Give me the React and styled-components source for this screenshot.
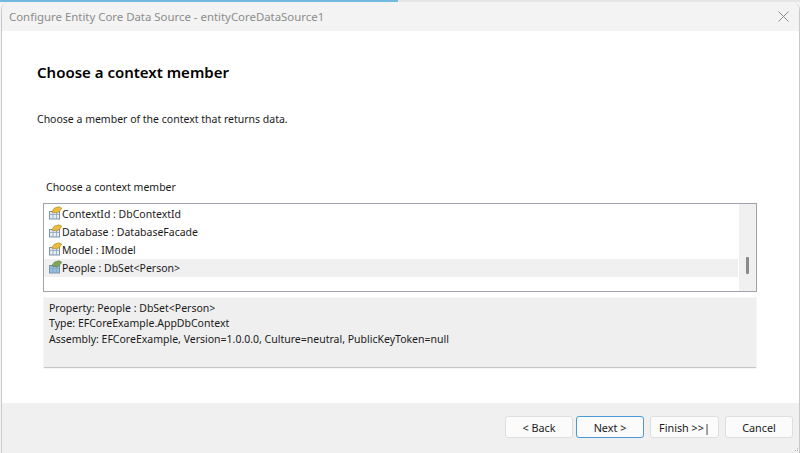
import React from 'react'
import styled, { createGlobalStyle } from 'styled-components'

const GlobalStyle = createGlobalStyle`
    html, body {
        margin: 0;
        padding: 0;
        background: #fff;
    }
    body {
        font-family: "Noto Sans", "Open Sans", sans-serif;
        color: #1a1a1a;
        overflow: hidden;
    }
`

const StyledPage = styled.div`
    width: 800px;
    height: 453px;
    display: flex;
    flex-direction: column;
    background: #f4f4f4;
    overflow: hidden;
`

const StyledProgress = styled.div`
    height: 2px;
    flex: none;
    background: linear-gradient(to right, #74b9e0 0, #74b9e0 398px, #e6e6e6 398px);
`

const StyledWindow = styled.div`
    flex: 1;
    display: flex;
    flex-direction: column;
    margin-left: 1px;
    border-left: 1px solid #c8c8c8;
    border-right: 1px solid #c8c8c8;
    border-top-left-radius: 8px;
    border-top-right-radius: 8px;
    overflow: hidden;
    background: #fff;
`

const StyledTitleBar = styled.div`
    height: 29px;
    flex: none;
    display: flex;
    align-items: center;
    justify-content: space-between;
    padding: 0 10px 0 7px;
    background: #f3f3f3;
`

const StyledTitle = styled.span`
    font-size: 11.4px;
    color: #8c8c8c;
`

const StyledClose = styled.svg`
    width: 11px;
    height: 11px;
    stroke: #8e8e8e;
    stroke-width: 1;
    fill: none;
`

const StyledBody = styled.div`
    flex: 1;
    display: flex;
    flex-direction: column;
    padding: 30px 42px 0 35px;
`

const StyledHeading = styled.h1`
    margin: 0;
    font-size: 15px;
    line-height: 22px;
    font-weight: 600;
    color: #000;
`

const StyledIntro = styled.p`
    margin: 28px 0 0;
    font-size: 10.5px;
    line-height: 16px;
`

const StyledGroup = styled.div`
    margin: 52px 0 0 6px;
    display: flex;
    flex-direction: column;
`

const StyledLabel = styled.label`
    padding-left: 3px;
    font-size: 10.5px;
    line-height: 16px;
`

const StyledList = styled.div`
    margin-top: 8px;
    height: 89px;
    box-sizing: border-box;
    border: 1px solid #a0a4aa;
    display: flex;
    background: #fff;
`

const StyledRows = styled.ul`
    flex: 1;
    margin: 0;
    padding: 1px 1px 0 0;
    list-style: none;
`

const StyledRow = styled.li`
    height: 18px;
    box-sizing: border-box;
    padding: 0 0 0 4px;
    display: flex;
    align-items: center;
    font-size: 10.5px;
    background: ${({ selected }) => (selected ? '#f0f0f0' : 'transparent')};
`

const StyledRowIcon = styled.svg`
    width: 14px;
    height: 14px;
    flex: none;
    margin-bottom: 2px;
`

const StyledScrollbar = styled.div`
    width: 17px;
    flex: none;
    display: flex;
    justify-content: center;
    padding-top: 53px;
    box-sizing: border-box;
    background: #f0f0f0;
`

const StyledThumb = styled.div`
    width: 3px;
    height: 17px;
    border-radius: 1px;
    background: #8a8a8a;
`

const StyledDetails = styled.div`
    margin: 6px 0 0 1px;
    width: 712px;
    height: 70px;
    box-sizing: border-box;
    padding: 3px 5px 0;
    background: #efefef;
    border-bottom: 1px solid #c4c4c4;
    box-shadow: 0 0 0 1px #f6f6f6;
    font-size: 10.5px;
    line-height: 15.4px;
`

const StyledFooter = styled.div`
    position: relative;
    height: 50px;
    flex: none;
    display: flex;
    align-items: center;
    justify-content: flex-end;
    gap: 3px;
    padding: 0 6px 2px 0;
    box-sizing: border-box;
    background: #f0f0f0;
`

const StyledGrip = styled.svg`
    position: absolute;
    right: 0;
    bottom: 0;
    width: 5px;
    height: 5px;
    fill: #b4b4b4;
`

const StyledButton = styled.button`
    width: ${({ wide }) => (wide ? '69px' : '68px')};
    height: 22px;
    margin-left: ${({ gapped }) => (gapped ? '3px' : '0')};
    padding: 0;
    box-sizing: border-box;
    border: 1px solid ${({ primary }) => (primary ? '#4a9ad8' : '#dedede')};
    border-radius: 3px;
    background: #fbfbfb;
    font-family: inherit;
    font-size: 10.8px;
    color: #1a1a1a;
`

const PropertyIcon = ({ selected }) => (
    <StyledRowIcon viewBox="0 0 14 14">
        <rect x="1.5" y="5.5" width="10" height="7.5" fill={selected ? '#8fc0e6' : '#e4ecf4'} stroke="#7d93a8" />
        <path d="M1.5 8.5h10M5 5.5v7.5M8.5 5.5v7.5" stroke="#8fa5ba" strokeWidth=".8" />
        <path d="M3.5 6 L6.5 2 L11 .8 L13.8 2.2 L12 4.5 L9.5 7 Z" fill={selected ? '#7da65a' : '#ecbd3c'} stroke={selected ? '#5a8040' : '#a67c1e'} strokeWidth=".6" />
    </StyledRowIcon>
)

const members = [
    { name: 'ContextId : DbContextId' },
    { name: 'Database : DatabaseFacade' },
    { name: 'Model : IModel' },
    { name: 'People : DbSet<Person>', selected: true }
]

export default function App() {
    return <StyledPage>
        <GlobalStyle />
        <StyledProgress />
        <StyledWindow>
            <StyledTitleBar>
                <StyledTitle>Configure Entity Core Data Source - entityCoreDataSource1</StyledTitle>
                <StyledClose viewBox="0 0 11 11">
                    <path d="M.5.5l10 10M10.5.5l-10 10" />
                </StyledClose>
            </StyledTitleBar>
            <StyledBody>
                <StyledHeading>Choose a context member</StyledHeading>
                <StyledIntro>Choose a member of the context that returns data.</StyledIntro>
                <StyledGroup>
                    <StyledLabel>Choose a context member</StyledLabel>
                    <StyledList>
                        <StyledRows>
                            {members.map(member => (
                                <StyledRow key={member.name} selected={member.selected}>
                                    <PropertyIcon selected={member.selected} />
                                    {member.name}
                                </StyledRow>
                            ))}
                        </StyledRows>
                        <StyledScrollbar>
                            <StyledThumb />
                        </StyledScrollbar>
                    </StyledList>
                    <StyledDetails>
                        Property: People : DbSet&lt;Person&gt;<br />
                        Type: EFCoreExample.AppDbContext<br />
                        Assembly: EFCoreExample, Version=1.0.0.0, Culture=neutral, PublicKeyToken=null
                    </StyledDetails>
                </StyledGroup>
            </StyledBody>
            <StyledFooter>
                <StyledButton>&lt; Back</StyledButton>
                <StyledButton primary>Next &gt;</StyledButton>
                <StyledButton wide gapped>Finish &gt;&gt;|</StyledButton>
                <StyledButton gapped>Cancel</StyledButton>
                <StyledGrip viewBox="0 0 5 5">
                    <rect x="3" y="0" width="1" height="1" />
                    <rect x="1" y="2" width="1" height="1" />
                    <rect x="3" y="2" width="1" height="1" />
                </StyledGrip>
            </StyledFooter>
        </StyledWindow>
    </StyledPage>
}
